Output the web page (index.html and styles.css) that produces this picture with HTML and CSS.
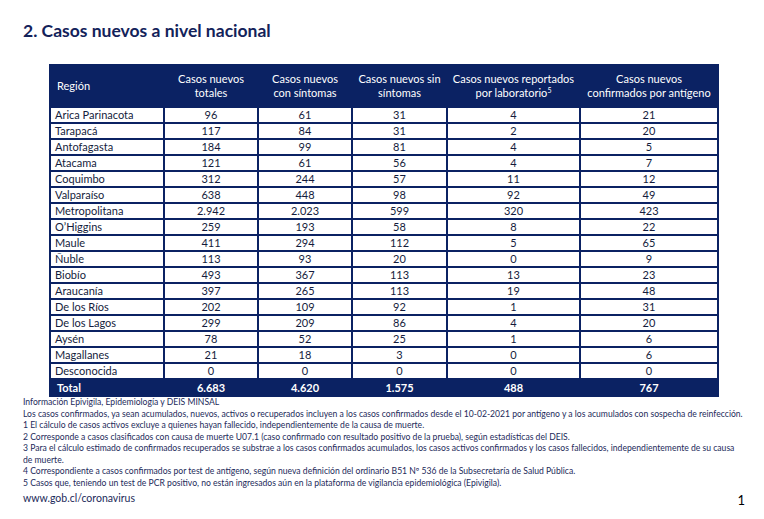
FILE: index.html
```html
<!DOCTYPE html>
<html lang="es">
<head>
<meta charset="utf-8">
<title>Casos nuevos a nivel nacional</title>
<link rel="stylesheet" href="styles.css">
</head>
<body>
<main class="page">
  <h1 class="title">2. Casos nuevos a nivel nacional</h1>
  <table class="cases">
    <colgroup>
      <col class="c-reg"><col class="c-a"><col class="c-b"><col class="c-c"><col class="c-d"><col class="c-e">
    </colgroup>
    <thead>
      <tr>
        <th class="reg">Región</th>
        <th>Casos nuevos<br>totales</th>
        <th>Casos nuevos<br>con síntomas</th>
        <th>Casos nuevos sin<br>síntomas</th>
        <th>Casos nuevos reportados<br>por laboratorio<sup>5</sup></th>
        <th>Casos nuevos<br>confirmados por antígeno</th>
      </tr>
    </thead>
    <tbody>
      <tr><td class="reg">Arica Parinacota</td><td>96</td><td>61</td><td>31</td><td>4</td><td>21</td></tr>
      <tr><td class="reg">Tarapacá</td><td>117</td><td>84</td><td>31</td><td>2</td><td>20</td></tr>
      <tr><td class="reg">Antofagasta</td><td>184</td><td>99</td><td>81</td><td>4</td><td>5</td></tr>
      <tr><td class="reg">Atacama</td><td>121</td><td>61</td><td>56</td><td>4</td><td>7</td></tr>
      <tr><td class="reg">Coquimbo</td><td>312</td><td>244</td><td>57</td><td>11</td><td>12</td></tr>
      <tr><td class="reg">Valparaíso</td><td>638</td><td>448</td><td>98</td><td>92</td><td>49</td></tr>
      <tr><td class="reg">Metropolitana</td><td>2.942</td><td>2.023</td><td>599</td><td>320</td><td>423</td></tr>
      <tr><td class="reg">O’Higgins</td><td>259</td><td>193</td><td>58</td><td>8</td><td>22</td></tr>
      <tr><td class="reg">Maule</td><td>411</td><td>294</td><td>112</td><td>5</td><td>65</td></tr>
      <tr><td class="reg">Ñuble</td><td>113</td><td>93</td><td>20</td><td>0</td><td>9</td></tr>
      <tr><td class="reg">Biobío</td><td>493</td><td>367</td><td>113</td><td>13</td><td>23</td></tr>
      <tr><td class="reg">Araucanía</td><td>397</td><td>265</td><td>113</td><td>19</td><td>48</td></tr>
      <tr><td class="reg">De los Ríos</td><td>202</td><td>109</td><td>92</td><td>1</td><td>31</td></tr>
      <tr><td class="reg">De los Lagos</td><td>299</td><td>209</td><td>86</td><td>4</td><td>20</td></tr>
      <tr><td class="reg">Aysén</td><td>78</td><td>52</td><td>25</td><td>1</td><td>6</td></tr>
      <tr><td class="reg">Magallanes</td><td>21</td><td>18</td><td>3</td><td>0</td><td>6</td></tr>
      <tr><td class="reg">Desconocida</td><td>0</td><td>0</td><td>0</td><td>0</td><td>0</td></tr>
    </tbody>
    <tfoot>
      <tr><td class="reg">Total</td><td>6.683</td><td>4.620</td><td>1.575</td><td>488</td><td>767</td></tr>
    </tfoot>
  </table>
  <div class="notes">
    <p>Información Epivigila, Epidemiología y DEIS MINSAL</p>
    <p>Los casos confirmados, ya sean acumulados, nuevos, activos o recuperados incluyen a los casos confirmados desde el 10-02-2021 por antígeno y a los acumulados con sospecha de reinfección.</p>
    <p>1 El cálculo de casos activos excluye a quienes hayan fallecido, independientemente de la causa de muerte.</p>
    <p>2 Corresponde a casos clasificados con causa de muerte U07.1 (caso confirmado con resultado positivo de la prueba), según estadísticas del DEIS.</p>
    <p>3 Para el cálculo estimado de confirmados recuperados se substrae a los casos confirmados acumulados, los casos activos confirmados y los casos fallecidos, independientemente de su causa<br>de muerte.</p>
    <p>4 Correspondiente a casos confirmados por test de antígeno, según nueva definición del ordinario B51 Nº 536 de la Subsecretaría de Salud Pública.</p>
    <p>5 Casos que, teniendo un test de PCR positivo, no están ingresados aún en la plataforma de vigilancia epidemiológica (Epivigila).</p>
  </div>
  <footer class="foot">
    <span class="url">www.gob.cl/coronavirus</span>
    <span class="pg">1</span>
  </footer>
</main>
</body>
</html>
```
FILE: styles.css
```css
* { box-sizing: border-box; }
html, body { margin: 0; padding: 0; background: #fff; }
body {
  width: 764px;
  height: 519px;
  overflow: hidden;
  font-family: Lato, "Open Sans", sans-serif;
}
.page {
  padding: 20px 0 0 23px;
}
.title {
  margin: 0;
  font-size: 17.5px;
  line-height: 22px;
  font-weight: 700;
  color: #13225a;
}
.cases {
  margin: 22px 0 0 26px;
  width: 668px;
  table-layout: fixed;
  border-collapse: collapse;
  font-size: 11px;
  color: #141c3c;
}
.c-reg { width: 114px; }
.c-a { width: 94px; }
.c-b { width: 94px; }
.c-c { width: 95px; }
.c-d { width: 133px; }
.c-e { width: 138px; }
.cases th {
  background: #0b2263;
  color: #fff;
  font-weight: 400;
  height: 42px;
  line-height: 14px;
  padding: 0;
  text-align: center;
  border: 2px solid #0b2263;
}
.cases th sup {
  font-size: 7px;
  line-height: 0;
  vertical-align: 4px;
}
.cases th.reg { text-align: left; padding-left: 6px; }
.cases td {
  border: 2px solid #0b2263;
  height: 16px;
  padding: 0;
  line-height: 12px;
  text-align: center;
}
.cases td.reg { text-align: left; padding-left: 4px; }
.cases tfoot td {
  background: #0b2263;
  color: #fff;
  font-weight: 700;
  height: 17px;
}
.cases tfoot td.reg { padding-left: 6px; }
.notes {
  margin-top: 0;
  font-size: 8.6px;
  line-height: 11.5px;
  color: #1c2a5a;
}
.notes p { margin: 0; white-space: nowrap; }
.foot {
  display: flex;
  justify-content: space-between;
  align-items: flex-end;
  width: 722px;
  margin-top: 3px;
}
.url {
  font-size: 10.5px;
  line-height: 13px;
  color: #1c2a5a;
}
.pg {
  font-size: 13px;
  line-height: 13px;
  color: #000;
  position: relative;
  top: 2px;
}
```
